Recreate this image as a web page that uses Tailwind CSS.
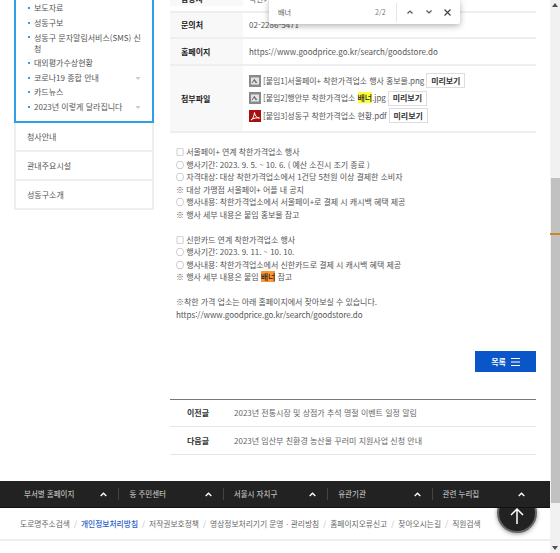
<!DOCTYPE html>
<html lang="ko"><head><meta charset="utf-8">
<script src="https://cdn.jsdelivr.net/npm/@tailwindcss/browser@4"></script>
</head>
<body class="bg-white">
<div class="relative flex w-[560px] h-[553px] overflow-hidden font-['Noto_Sans_CJK_KR','Noto_Sans',sans-serif] text-[#444]">
  <div class="w-[550px] flex flex-col">
    <div class="h-[481px] flex gap-4 pl-[14px] pr-[14px] overflow-hidden">
      <aside class="w-[140px] shrink-0">
        <ul class="border-2 border-t-0 border-[#2f9fe6] h-[123px] pl-[12px] pr-[11px] pt-[1px] text-[8px] leading-[14.6px] text-[#555]">
          <li class="relative pl-[6px]"><span class="absolute left-0 top-[6px] size-[2px] bg-[#2f9fe6]"></span>보도자료</li>
          <li class="relative pl-[6px]"><span class="absolute left-0 top-[6px] size-[2px] bg-[#2f9fe6]"></span>성동구보</li>
          <li class="relative pl-[6px] leading-[11.5px] py-[1.5px]"><span class="absolute left-0 top-[6px] size-[2px] bg-[#2f9fe6]"></span>성동구 문자알림서비스(SMS) 신청</li>
          <li class="relative pl-[6px]"><span class="absolute left-0 top-[6px] size-[2px] bg-[#2f9fe6]"></span>대외평가수상현황</li>
          <li class="relative pl-[6px] flex justify-between items-center"><span class="absolute left-0 top-[6px] size-[2px] bg-[#2f9fe6]"></span>코로나19 종합 안내<svg class="w-[6px] h-[3px]" viewBox="0 0 7 4"><path d="M0 0h7L3.500 4z" fill="#ccc"/></svg></li>
          <li class="relative pl-[6px]"><span class="absolute left-0 top-[6px] size-[2px] bg-[#2f9fe6]"></span>카드뉴스</li>
          <li class="relative pl-[6px] flex justify-between items-center"><span class="absolute left-0 top-[6px] size-[2px] bg-[#2f9fe6]"></span>2023년 이렇게 달라집니다<svg class="w-[6px] h-[3px]" viewBox="0 0 7 4"><path d="M0 0h7L3.500 4z" fill="#ccc"/></svg></li>
        </ul>
        <div class="border-2 border-t-0 border-[#eee] text-[8px] text-[#555]">
          <div class="h-[29px] flex items-center pl-[11px] border-b-2 border-[#eee]">청사안내</div>
          <div class="h-[29px] flex items-center pl-[11px] border-b-2 border-[#eee]">관내주요시설</div>
          <div class="h-[27px] flex items-center pl-[11px]">성동구소개</div>
        </div>
      </aside>
      <main class="w-[366px] shrink-0 text-[8px]">
        <div class="text-[#555] [&>div]:flex [&>div]:border-b-2 [&>div]:border-[#eee]">
          <div class="h-[13px] overflow-hidden">
            <div class="w-[73px] h-full bg-[#f8f8f8] font-bold text-[#222] pl-[11px] leading-[8px] -mt-[5px]">담당자</div>
            <div class="pl-[6px] leading-[8px] -mt-[5px]">착한가격업소</div>
          </div>
          <div class="h-[26px]">
            <div class="w-[73px] bg-[#f8f8f8] font-bold text-[#222] pl-[11px] flex items-center">문의처</div>
            <div class="pl-[6px] flex items-center">02-2286-5471</div>
          </div>
          <div class="h-[27px]">
            <div class="w-[73px] bg-[#f8f8f8] font-bold text-[#222] pl-[11px] flex items-center">홈페이지</div>
            <div class="pl-[6px] flex items-center">https://www.goodprice.go.kr/search/goodstore.do</div>
          </div>
          <div class="h-[67px]">
            <div class="w-[73px] bg-[#f8f8f8] font-bold text-[#222] pl-[11px] flex items-center">첨부파일</div>
            <div class="pl-[6px] pt-[7px] flex flex-col gap-[2.500px] tracking-[-0.05px]">
              <div class="flex items-center h-[15px] gap-[2px]">
                <svg class="size-[12px] shrink-0" viewBox="0 0 12 12"><rect width="12" height="12" fill="#8a8a8a"/><rect x="2" y="2.500" width="8" height="7" fill="#e4e4e4"/><path d="M3 8l2-3 2 3M5 4l3 4" stroke="#666" fill="none"/></svg>
                <span>[붙임1]서울페이+ 착한가격업소 행사 홍보물.png</span>
                <span class="border border-[#ddd] h-[15px] w-[39px] flex items-center justify-center font-bold text-[#333]">미리보기</span>
              </div>
              <div class="flex items-center h-[15px] gap-[2px]">
                <svg class="size-[12px] shrink-0" viewBox="0 0 12 12"><rect width="12" height="12" fill="#8a8a8a"/><rect x="2" y="2.500" width="8" height="7" fill="#e4e4e4"/><path d="M3 8l2-3 2 3M5 4l3 4" stroke="#666" fill="none"/></svg>
                <span>[붙임2]행안부 착한가격업소 <mark class="bg-[#ffff38] text-[#222] font-medium">배너</mark>.jpg</span>
                <span class="border border-[#ddd] h-[15px] w-[39px] flex items-center justify-center font-bold text-[#333]">미리보기</span>
              </div>
              <div class="flex items-center h-[15px] gap-[2px]">
                <svg class="size-[12px] shrink-0" viewBox="0 0 12 12"><rect width="12" height="12" fill="#a80f0f"/><path d="M2 10c2-1 3-4 3.500-7.500C6 6 8 8 10.500 8 8 7.500 4 8 2 10z" stroke="#fff" stroke-width="1" fill="none"/></svg>
                <span>[붙임3]성동구 착한가격업소 현황.pdf</span>
                <span class="border border-[#ddd] h-[15px] w-[39px] flex items-center justify-center font-bold text-[#333]">미리보기</span>
              </div>
            </div>
          </div>
        </div>
        <div class="mt-[13px] pl-[6px] text-[8px] tracking-[-0.05px] leading-[12.5px] text-[#555] [&>p]:whitespace-nowrap [&>p]:min-h-[12.5px]">
          <p>□ 서울페이+ 연계 착한가격업소 행사</p>
          <p>○ 행사기간: 2023. 9. 5. ~ 10. 6. ( 예산 소진시 조기 종료 )</p>
          <p>○ 자격대상: 대상 착한가격업소에서 1건당 5천원 이상 결제한 소비자</p>
          <p>※ 대상 가맹점 서울페이+ 어플 내 공지</p>
          <p>○ 행사내용: 착한가격업소에서 서울페이+로 결제 시 캐시백 혜택 제공</p>
          <p>※ 행사 세부 내용은 붙임 홍보물 참고</p>
          <p></p>
          <p>□ 신한카드 연계 착한가격업소 행사</p>
          <p>○ 행사기간: 2023. 9. 11. ~ 10. 10.</p>
          <p>○ 행사내용: 착한가격업소에서 신한카드로 결제 시 캐시백 혜택 제공</p>
          <p>※ 행사 세부 내용은 붙임 <mark class="bg-[#ff9632] text-[#222] font-medium">배너</mark> 참고</p>
          <p></p>
          <p>※착한 가격 업소는 아래 홈페이지에서 찾아보실 수 있습니다.</p>
          <p>https://www.goodprice.go.kr/search/goodstore.do</p>
        </div>
        <div class="flex justify-end mt-[30px]">
          <div class="w-[61px] h-[21px] bg-[#0a56c8] text-white text-[8px] font-bold flex items-center justify-center gap-[5px]">목록
            <svg class="w-[9px] h-[8px]" viewBox="0 0 9 8"><path d="M0 .5h9M0 4h9M0 7.500h9" stroke="#fff"/></svg>
          </div>
        </div>
        <div class="mt-[27px] border-t border-[#777] text-[8px]">
          <div class="h-[27px] flex items-center border-b border-[#e5e5e5]"><b class="w-[64px] pl-[17px] text-[#333] font-bold shrink-0">이전글</b><span class="text-[#666]">2023년 전통시장 및 상점가 추석 명절 이벤트 일정 알림</span></div>
          <div class="h-[28px] flex items-center border-b border-[#e5e5e5]"><b class="w-[64px] pl-[17px] text-[#333] font-bold shrink-0">다음글</b><span class="text-[#666]">2023년 임산부 친환경 농산물 꾸러미 지원사업 신청 안내</span></div>
        </div>
      </main>
    </div>
    <div class="h-[27px] bg-[#222] border-b border-[#111] px-[14px] grid grid-cols-5 items-center text-[7.5px] text-[#bbb] font-medium relative z-10">
      <div class="flex justify-between items-center h-[12px] pl-[10px] pr-[11px]">부서별 홈페이지<svg class="w-[7px] h-[5px]" viewBox="0 0 7 5"><path d="M.7 4 3.500 1.300 6.300 4" stroke="#fff" stroke-width="1.400" fill="none"/></svg></div>
      <div class="flex justify-between items-center h-[12px] pl-[10px] pr-[11px] border-l border-[#444]">동 주민센터<svg class="w-[7px] h-[5px]" viewBox="0 0 7 5"><path d="M.7 4 3.500 1.300 6.300 4" stroke="#fff" stroke-width="1.400" fill="none"/></svg></div>
      <div class="flex justify-between items-center h-[12px] pl-[10px] pr-[11px] border-l border-[#444]">서울시 자치구<svg class="w-[7px] h-[5px]" viewBox="0 0 7 5"><path d="M.7 4 3.500 1.300 6.300 4" stroke="#fff" stroke-width="1.400" fill="none"/></svg></div>
      <div class="flex justify-between items-center h-[12px] pl-[10px] pr-[11px] border-l border-[#444]">유관기관<svg class="w-[7px] h-[5px]" viewBox="0 0 7 5"><path d="M.7 4 3.500 1.300 6.300 4" stroke="#fff" stroke-width="1.400" fill="none"/></svg></div>
      <div class="flex justify-between items-center h-[12px] pl-[10px] pr-[11px] border-l border-[#444]">관련 누리집<svg class="w-[7px] h-[5px]" viewBox="0 0 7 5"><path d="M.7 4 3.500 1.300 6.300 4" stroke="#fff" stroke-width="1.400" fill="none"/></svg></div>
    </div>
    <div class="h-[33px] border-b-2 border-[#eee] pl-[20px] flex items-center gap-[4px] text-[7.75px] text-[#666] whitespace-nowrap">
      <span>도로명주소검색</span><span class="text-[#bbb]">/</span><span class="text-[#2a62c8] font-medium">개인정보처리방침</span><span class="text-[#bbb]">/</span><span>저작권보호정책</span><span class="text-[#bbb]">/</span><span>영상정보처리기기 운영ㆍ관리방침</span><span class="text-[#bbb]">/</span><span>홈페이지오류신고</span><span class="text-[#bbb]">/</span><span>찾아오시는길</span><span class="text-[#bbb]">/</span><span>직원검색</span>
    </div>
  </div>
  <div class="relative w-[10px] bg-[#f1f1f1]">
    <svg class="absolute left-[2px] top-[3px] w-[6px] h-[4px]" viewBox="0 0 6 4"><path d="M3 0l3 4H0z" fill="#505050"/></svg>
    <div class="absolute left-[1px] right-0 top-[178px] h-[325px] bg-[#c1c1c1]"></div>
    <div class="absolute left-0 right-0 top-[233px] h-[2px] bg-[#c98a1a]"></div>
    <svg class="absolute left-[2px] bottom-[3px] w-[6px] h-[4px]" viewBox="0 0 6 4"><path d="M0 0h6L3 4z" fill="#505050"/></svg>
  </div>

  <div class="absolute left-[269px] top-0 w-[191px] h-[24px] bg-white rounded-b-[2px] shadow-[0_2px_6px_rgba(0,0,0,0.3)] flex items-center pl-[9px] text-[7px] text-[#555]">
    <span class="w-[97px]">배너</span><span class="w-[21px] text-[#777]">2/2</span>
    <span class="w-px h-[19px] bg-[#e5e5e5]"></span>
    <svg class="w-[6px] h-[4px] ml-[10px]" viewBox="0 0 6 4"><path d="M.5 3.500 3 1l2.500 2.500" stroke="#555" stroke-width="1.200" fill="none"/></svg>
    <svg class="w-[6px] h-[4px] ml-[13px]" viewBox="0 0 6 4"><path d="M.5.500 3 3 5.500.5" stroke="#555" stroke-width="1.200" fill="none"/></svg>
    <svg class="size-[7px] ml-[12px]" viewBox="0 0 7 7"><path d="M.5.500l6 6M6.500.5l-6 6" stroke="#444" stroke-width="1.200"/></svg>
  </div>

  <div class="absolute left-[497px] top-[493px] size-[40px] rounded-full bg-[#222] border-2 border-[#666] shadow-[0_1px_4px_rgba(0,0,0,0.4)] flex items-center justify-center pt-[5px]">
    <svg class="w-[14px] h-[16px]" viewBox="0 0 14 16"><path d="M7 16V1M1 7l6-6 6 6" stroke="#fff" stroke-width="1.500" fill="none"/></svg>
  </div>
</div>
</body></html>
